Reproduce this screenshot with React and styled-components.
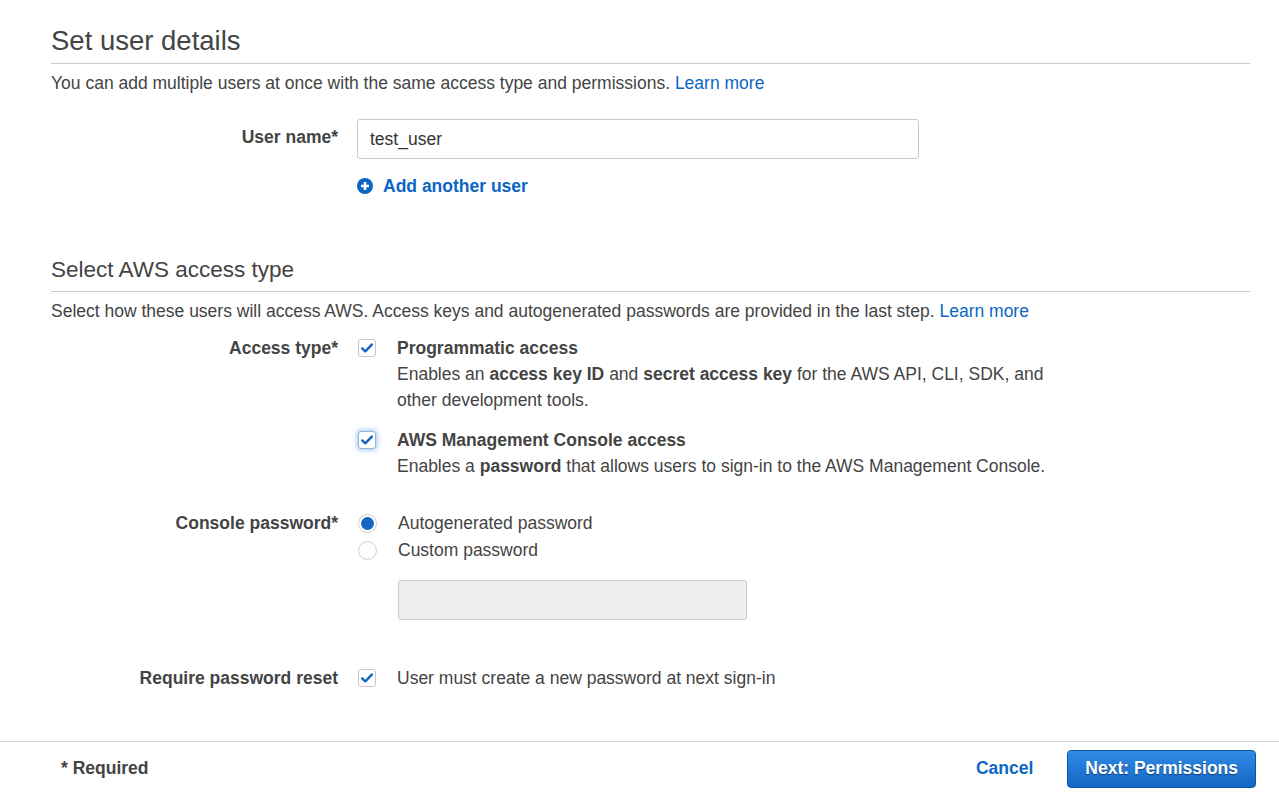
import React from 'react'
import styled, { createGlobalStyle } from 'styled-components'

const GlobalStyle = createGlobalStyle`
  html, body {
    margin: 0;
    padding: 0;
    background: #fff;
  }
  body {
    font-family: "Liberation Sans", Arial, sans-serif;
    font-size: 17.5px;
    color: #444;
  }
`

const BLUE = '#0b66c3'

const Page = styled.div`
  width: 1279px;
  min-height: 797px;
  display: flex;
  flex-direction: column;
`

const Content = styled.div`
  padding: 25px 29px 0 51px;
  flex: 1;
`

const Section = styled.section`
  margin-top: ${props => props.top || 0}px;
`

const Heading = styled.h2`
  margin: 0;
  font-size: ${props => props.size}px;
  font-weight: normal;
  line-height: ${props => props.lh}px;
  color: #444;
  padding-bottom: ${props => props.pad}px;
  border-bottom: 1px solid #ccc;
`

const Description = styled.p`
  margin: 9px 0 0;
  line-height: 20px;
  color: #444;
`

const Link = styled.a`
  color: ${BLUE};
  text-decoration: none;
  cursor: pointer;
`

const FormRow = styled.div`
  display: grid;
  grid-template-columns: 287px 1fr;
  column-gap: 19px;
  margin-top: ${props => props.top || 0}px;
  align-items: start;
`

const Label = styled.label`
  text-align: right;
  font-weight: bold;
  line-height: 26px;
  margin-top: ${props => props.top || 0}px;
  color: #444;
`

const Control = styled.div`
  display: flex;
  flex-direction: column;
`

const TextInput = styled.input`
  width: 562px;
  height: 40px;
  box-sizing: border-box;
  border: 1px solid #c9c9c9;
  border-radius: 3px;
  padding: 0 12px;
  font-family: inherit;
  font-size: 17.5px;
  color: #333;
  outline: none;
`

const AddUser = styled.div`
  display: flex;
  align-items: center;
  gap: 10px;
  margin-top: 15px;
  line-height: 24px;
  font-weight: bold;
  color: ${BLUE};
  cursor: pointer;
`

const Option = styled.div`
  display: flex;
  align-items: flex-start;
  gap: 21px;
  margin-top: ${props => props.top || 0}px;
  padding-left: 1px;
`

const Box = styled.span`
  flex: none;
  width: 18px;
  height: 18px;
  margin-top: 4px;
  box-sizing: border-box;
  border: 1px solid ${props => (props.focus ? '#8fb4e0' : '#c6c6c6')};
  border-radius: 3px;
  background: #fff;
  display: flex;
  align-items: center;
  justify-content: center;
  box-shadow: ${props => (props.focus ? '0 0 5px 1px rgba(40,120,220,0.45)' : 'none')};
`

const Radio = styled.span`
  flex: none;
  width: 19px;
  height: 19px;
  margin-top: 4px;
  box-sizing: border-box;
  border-radius: 50%;
  border: 1px solid #cfcfcf;
  background: #fff;
  display: flex;
  align-items: center;
  justify-content: center;

  &::after {
    content: '';
    display: ${props => (props.checked ? 'block' : 'none')};
    width: 13px;
    height: 13px;
    border-radius: 50%;
    background: #1466c0;
  }
`

const OptionText = styled.div`
  line-height: 26px;
  max-width: 660px;
  color: #444;
`

const OptionTitle = styled.div`
  font-weight: bold;
`

const DisabledField = styled.div`
  width: 349px;
  height: 40px;
  box-sizing: border-box;
  margin: 17px 0 0 41px;
  background: #eee;
  border: 1px solid #ccc;
  border-radius: 3px;
`

const Footer = styled.footer`
  margin-top: 45px;
  border-top: 1px solid #d5d5d5;
  height: 56px;
  box-sizing: border-box;
  padding: 0 23px 2px 61px;
  display: flex;
  align-items: center;
`

const Required = styled.div`
  font-weight: bold;
  color: #444;
  flex: 1;
`

const CancelLink = styled.a`
  font-weight: bold;
  color: ${BLUE};
  margin-right: 34px;
  cursor: pointer;
`

const PrimaryButton = styled.button`
  height: 38px;
  padding: 0 17px;
  border: 1px solid #0a55a6;
  border-radius: 4px;
  background: linear-gradient(#2f8be6, #1366c4);
  color: #fff;
  font-family: inherit;
  font-size: 17.5px;
  font-weight: bold;
  text-shadow: 0 1px 1px rgba(0, 0, 0, 0.45);
  cursor: pointer;
`

const Check = () => (
  <svg width="12" height="10" viewBox="0 0 12 10">
    <path d="M1.2 5.4 L4.3 8.3 L10.8 1.6" fill="none" stroke="#1466c0" strokeWidth="2.4" strokeLinecap="round" strokeLinejoin="round" />
  </svg>
)

const PlusCircle = () => (
  <svg width="16" height="16" viewBox="0 0 16 16">
    <circle cx="8" cy="8" r="8" fill={BLUE} />
    <path d="M8 4 V12 M4 8 H12" stroke="#fff" strokeWidth="2.6" />
  </svg>
)

const Checkbox = ({ focus }) => (
  <Box focus={focus}>
    <Check />
  </Box>
)

export default function App() {
  return (
    <Page>
      <GlobalStyle />
      <Content>
        <Section>
          <Heading size={27.5} lh={32} pad={6}>Set user details</Heading>
          <Description>
            You can add multiple users at once with the same access type and permissions.{' '}
            <Link>Learn more</Link>
          </Description>
          <FormRow top={26}>
            <Label top={5}>User name*</Label>
            <Control>
              <TextInput defaultValue="test_user" />
            </Control>
          </FormRow>
          <FormRow>
            <span />
            <AddUser>
              <PlusCircle />
              Add another user
            </AddUser>
          </FormRow>
        </Section>

        <Section top={58}>
          <Heading size={22.5} lh={28} pad={7}>Select AWS access type</Heading>
          <Description>
            Select how these users will access AWS. Access keys and autogenerated passwords are provided in
            the last step. <Link>Learn more</Link>
          </Description>

          <FormRow top={14}>
            <Label>Access type*</Label>
            <Control>
              <Option>
                <Checkbox />
                <OptionText>
                  <OptionTitle>Programmatic access</OptionTitle>
                  Enables an <b>access key ID</b> and <b>secret access key</b> for the AWS API, CLI, SDK, and
                  other development tools.
                </OptionText>
              </Option>
              <Option top={14}>
                <Checkbox focus />
                <OptionText>
                  <OptionTitle>AWS Management Console access</OptionTitle>
                  Enables a <b>password</b> that allows users to sign-in to the AWS Management Console.
                </OptionText>
              </Option>
            </Control>
          </FormRow>

          <FormRow top={31}>
            <Label>Console password*</Label>
            <Control>
              <Option>
                <Radio checked />
                <OptionText>Autogenerated password</OptionText>
              </Option>
              <Option top={1}>
                <Radio />
                <OptionText>Custom password</OptionText>
              </Option>
              <DisabledField />
            </Control>
          </FormRow>

          <FormRow top={45}>
            <Label>Require password reset</Label>
            <Control>
              <Option>
                <Checkbox />
                <OptionText>User must create a new password at next sign-in</OptionText>
              </Option>
            </Control>
          </FormRow>
        </Section>
      </Content>
      <Footer>
        <Required>* Required</Required>
        <CancelLink>Cancel</CancelLink>
        <PrimaryButton>Next: Permissions</PrimaryButton>
      </Footer>
    </Page>
  )
}
